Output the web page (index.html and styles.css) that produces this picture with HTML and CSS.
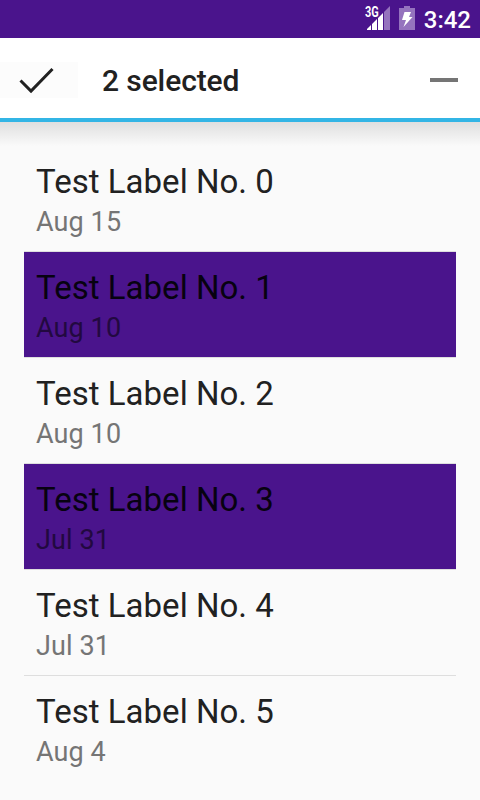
FILE: index.html
```html
<!DOCTYPE html>
<html lang="en">
<head>
<meta charset="utf-8">
<title>Selection</title>
<link rel="stylesheet" href="styles.css">
</head>
<body>
<div class="status">
  <svg class="signal" width="24" height="24" viewBox="0 0 24 24"><path d="M1 24V23L5 19V24ZM6 24V18L11 13V24ZM12 24V12L17 7V24Z" fill="#fff"/><path d="M18 24V6L24 0V24Z" fill="#9573be"/></svg>
  <span class="net">3G</span>
  <svg class="battery" width="16" height="24" viewBox="0 0 16 24"><path d="M5 0h6v2h5v22H0V2h5Z" fill="#9573be"/><path d="M5.500 6h6.500L10 11h3.500L4.500 21L7 14H3Z" fill="#fff"/></svg>
  <span class="clock">3:42</span>
</div>
<header class="bar">
  <div class="done"><svg width="36" height="28" viewBox="0 0 36 28"><path d="M2.5 13.5L13 24L34.500 2" fill="none" stroke="#212121" stroke-width="3"/></svg></div>
  <h1>2 selected</h1>
  <span class="minus"></span>
</header>
<ul class="list">
  <li><b>Test Label No. 0</b><span>Aug 15</span></li>
  <li class="on"><b>Test Label No. 1</b><span>Aug 10</span></li>
  <li><b>Test Label No. 2</b><span>Aug 10</span></li>
  <li class="on"><b>Test Label No. 3</b><span>Jul 31</span></li>
  <li><b>Test Label No. 4</b><span>Jul 31</span></li>
  <li><b>Test Label No. 5</b><span>Aug 4</span></li>
</ul>
</body>
</html>
```
FILE: styles.css
```css
* { box-sizing: border-box; }
body { margin: 0; height: 800px; overflow: hidden; background: #fafafa; font-family: Roboto, sans-serif; }
.status { position: relative; height: 38px; background: #4a148c; display: flex; align-items: center; justify-content: flex-end; padding-right: 9px; color: #fff; }
.signal { margin: -2px 9px 0 0; }
.battery { margin: -2px 9px 0 0; }
.net { position: absolute; left: 365px; top: 5px; font: 700 14px/15px Roboto, sans-serif; transform: scaleX(.78); transform-origin: left; }
.clock { font-size: 24px; font-weight: 500; padding-top: 2px; }
.bar { height: 84px; background: #fff; border-bottom: 4px solid #33b5e5; display: flex; align-items: center; padding: 4px 22px 0 0; }
.done { width: 78px; height: 36px; background: #fcfcfc; padding: 5px 18px; }
.bar h1 { margin: 0 auto 0 24px; font-size: 30px; font-weight: 500; letter-spacing: -.1px; color: #212121; }
.minus { width: 28px; height: 4px; background: #757575; }
.list { list-style: none; margin: 0; padding: 24px 24px 0; background: linear-gradient(#dfdfdf, #fafafa 24px); }
.list li { height: 106px; padding: 13px 12px 0; border-bottom: 1px solid #dedede; }
.list li:last-child { border-bottom: 0; }
.list b, .list span { display: block; font-weight: 400; }
.list b { font-size: 33px; line-height: 45px; letter-spacing: .03px; color: #212121; }
.list span { font-size: 27px; line-height: 36px; letter-spacing: .1px; color: #757575; }
.list .on { background: #4a148c; background-clip: padding-box; }
.list .on b { color: #070210; }
.list .on span { color: #220940; }
```
